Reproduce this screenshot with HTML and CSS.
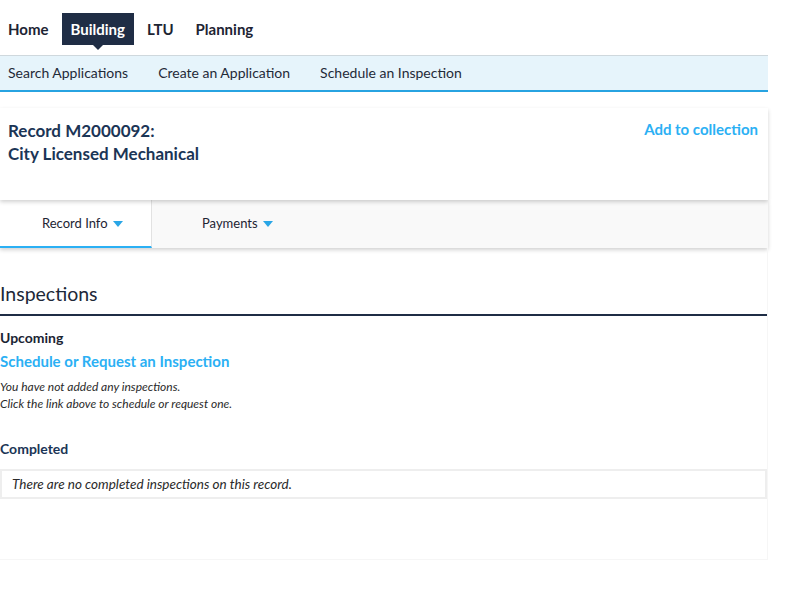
FILE: index.html
```html
<!DOCTYPE html>
<html lang="en">
<head>
    <meta charset="UTF-8">
    <meta name="viewport" content="width=device-width, initial-scale=1.0">
    <title>Record M2000092 - Inspections</title>
    <link rel="stylesheet" href="styles.css">
</head>
<body>
    <div class="page">
        <nav class="main-nav">
            <a class="nav-item" href="#">Home</a>
            <a class="nav-item active" href="#">Building</a>
            <a class="nav-item" href="#">LTU</a>
            <a class="nav-item" href="#">Planning</a>
        </nav>
        <nav class="sub-nav">
            <a href="#">Search Applications</a>
            <a href="#">Create an Application</a>
            <a href="#">Schedule an Inspection</a>
        </nav>

        <div class="record-card">
            <h1 class="record-title">Record M2000092:<br>City Licensed Mechanical</h1>
            <a class="collection-link" href="#">Add to collection</a>
        </div>
        <div class="tabs">
            <a class="tab active" href="#">Record Info <span class="caret"></span></a>
            <a class="tab tab-second" href="#">Payments <span class="caret"></span></a>
        </div>

        <div class="panel">
            <h2 class="section-title">Inspections</h2>
            <h3 class="sub-title">Upcoming</h3>
            <a class="schedule-link" href="#">Schedule or Request an Inspection</a>
            <p class="note">You have not added any inspections.<br>Click the link above to schedule or request one.</p>
            <h3 class="sub-title completed">Completed</h3>
            <div class="empty-box">There are no completed inspections on this record.</div>
        </div>
    </div>
</body>
</html>
```

FILE: styles.css
```css
body {
    margin: 0;
    padding: 0;
    font-family: Lato, "Liberation Sans", sans-serif;
    color: #1d2838;
    background-color: #fff;
}
a {
    text-decoration: none;
    color: inherit;
}
.page {
    width: 768px;
}
.main-nav {
    display: flex;
    gap: 4px;
    padding-top: 13px;
    margin-bottom: 10px;
}
.nav-item {
    position: relative;
    height: 32px;
    line-height: 32px;
    padding: 0 9px;
    font-size: 15px;
    font-weight: 700;
    color: #1d2433;
}
.nav-item:first-child {
    padding-left: 8px;
}
.nav-item.active {
    background-color: #1f2d45;
    color: #fff;
}
.nav-item.active::after {
    content: "";
    position: absolute;
    left: 50%;
    bottom: -5px;
    margin-left: -5px;
    border-left: 5px solid transparent;
    border-right: 5px solid transparent;
    border-top: 5px solid #1f2d45;
}
.sub-nav {
    display: flex;
    gap: 30px;
    height: 34px;
    line-height: 34px;
    padding: 0 8px;
    background-color: #e6f4fb;
    border-top: 1px solid #cfd8dd;
    border-bottom: 2px solid #27a3e1;
    font-size: 14px;
    color: #1f2a38;
}
.record-card {
    display: flex;
    justify-content: space-between;
    align-items: flex-start;
    height: 92px;
    margin-top: 16px;
    padding: 0 10px 0 8px;
    box-sizing: border-box;
    background-color: #fff;
    box-shadow: 0 2px 4px rgba(0,0,0,0.18);
    position: relative;
    z-index: 1;
}
.record-title {
    margin: 11px 0 0;
    font-size: 17px;
    line-height: 23px;
    font-weight: 700;
    color: #1b3556;
}
.collection-link {
    margin-top: 12px;
    font-size: 15px;
    font-weight: 700;
    color: #2bb0f4;
}
.tabs {
    display: flex;
    height: 48px;
    background-color: #f9f9f9;
    box-shadow: 0 2px 4px rgba(0,0,0,0.18);
}
.tab {
    display: flex;
    align-items: center;
    gap: 5px;
    box-sizing: border-box;
    width: 152px;
    padding-left: 42px;
    padding-bottom: 2px;
    font-size: 13px;
    color: #1d2433;
}
.tab.active {
    background-color: #fff;
    border-right: 1px solid #e2e2e2;
    border-bottom: 2px solid #2bb0f4;
    padding-bottom: 0;
}
.tab-second {
    padding-left: 50px;
}
.caret {
    display: inline-block;
    border-left: 5px solid transparent;
    border-right: 5px solid transparent;
    border-top: 6px solid #2aa6e6;
    margin-top: 1px;
}
.panel {
    height: 312px;
    box-sizing: border-box;
    padding-top: 34px;
    border-right: 1px solid #f6f6f6;
    border-bottom: 1px solid #f6f6f6;
}
.section-title {
    margin: 0;
    padding-bottom: 8px;
    font-size: 19.5px;
    font-weight: 400;
    line-height: 24px;
    color: #1d2838;
    border-bottom: 2px solid #1f2d45;
}
.sub-title {
    margin: 13px 0 0;
    font-size: 14px;
    font-weight: 700;
    line-height: 17px;
    color: #1a2433;
}
.schedule-link {
    display: block;
    margin-top: 5px;
    font-size: 15px;
    font-weight: 700;
    line-height: 20px;
    color: #2bb0f4;
}
.note {
    margin: 7px 0 0;
    font-size: 12px;
    font-style: italic;
    line-height: 17px;
    color: #2a2a2a;
}
.sub-title.completed {
    margin-top: 28px;
    color: #1b3556;
}
.empty-box {
    margin-top: 12px;
    width: 767px;
    box-sizing: border-box;
    height: 30px;
    line-height: 26px;
    padding-left: 10px;
    border: 2px solid #eeeeee;
    font-size: 13.5px;
    font-style: italic;
    color: #2a2a2a;
}
```
